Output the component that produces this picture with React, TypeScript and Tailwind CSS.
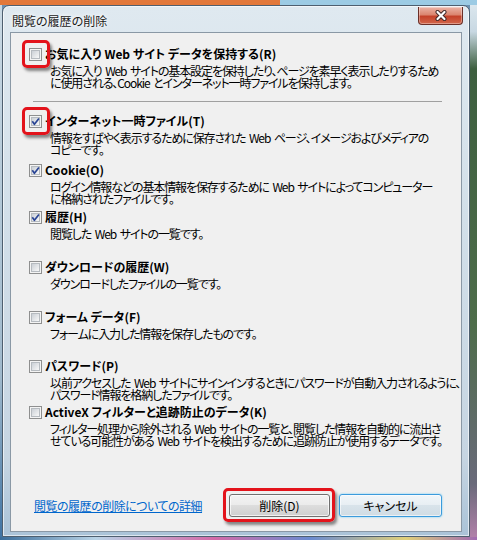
const options = [
  {
    title: "インターネット一時ファイル(T)",
    lines: [
      "情報をすばやく表示するために保存された Web ページ、イメージおよびメディアの",
      "コピーです。",
    ],
    checked: true,
    marked: true,
    h: "h-[49px]",
  },
  {
    title: "Cookie(O)",
    lines: [
      "ログイン情報などの基本情報を保存するために Web サイトによってコンピューター",
      "に格納されたファイルです。",
    ],
    checked: true,
    marked: false,
    h: "h-[47px]",
  },
  {
    title: "履歴(H)",
    lines: ["閲覧した Web サイトの一覧です。"],
    checked: true,
    marked: false,
    h: "h-[50px]",
  },
  {
    title: "ダウンロードの履歴(W)",
    lines: ["ダウンロードしたファイルの一覧です。"],
    checked: false,
    marked: false,
    h: "h-[50px]",
  },
  {
    title: "フォーム データ(F)",
    lines: ["フォームに入力した情報を保存したものです。"],
    checked: false,
    marked: false,
    h: "h-[49px]",
  },
  {
    title: "パスワード(P)",
    lines: [
      "以前アクセスした Web サイトにサインインするときにパスワードが自動入力されるように、",
      "パスワード情報を格納したファイルです。",
    ],
    checked: false,
    marked: false,
    h: "h-[46px]",
  },
  {
    title: "ActiveX フィルターと追跡防止のデータ(K)",
    lines: [
      "フィルター処理から除外される Web サイトの一覧と、閲覧した情報を自動的に流出さ",
      "せている可能性がある Web サイトを検出するために追跡防止が使用するデータです。",
    ],
    checked: false,
    marked: false,
    h: "",
  },
];

function Checkbox({ checked }: { checked: boolean }) {
  return (
    <span className="relative flex h-[13px] w-[13px] shrink-0 border border-[#8e8f8f] bg-[#f4f4f4] p-px">
      <span className="h-full w-full border border-[#b6bbc0] bg-[linear-gradient(135deg,#cbd0d6,#f8f8f8)]" />
      {checked && (
        <svg viewBox="0 0 13 13" className="absolute -inset-px h-[13px] w-[13px]">
          <path
            d="M3.3 6.3 5.4 9.3 9.9 3.4"
            fill="none"
            stroke="#2a4595"
            strokeWidth="1.7"
            strokeLinejoin="round"
          />
        </svg>
      )}
    </span>
  );
}

// red annotation frame drawn over the screenshot
function Mark({ className }: { className: string }) {
  return (
    <span
      className={`pointer-events-none absolute rounded-[5px] border-[3px] border-[#e3131b] shadow-[2px_3px_3px_rgba(0,0,0,0.45)] ${className}`}
    />
  );
}

function Option({
  title,
  lines,
  checked,
  marked,
}: {
  title: string;
  lines: string[];
  checked: boolean;
  marked: boolean;
}) {
  return (
    <div>
      <div className="flex h-[18px] items-center">
        <span className="relative">
          <Checkbox checked={checked} />
          {marked && <Mark className="-left-[7px] -top-[8px] h-[28px] w-[28px]" />}
        </span>
        <span className="ml-[3px] font-bold">{title}</span>
      </div>
      <div className="mt-[2px] whitespace-nowrap pl-[21px] leading-[12px] tracking-[-1.1px] [word-spacing:2px]">
        {lines.map((l) => (
          <div key={l}>{l}</div>
        ))}
      </div>
    </div>
  );
}

export default function App() {
  return (
    <div className="relative flex h-[540px] w-[477px] flex-col overflow-hidden bg-[#6a8fb0] font-['Noto_Sans_CJK_JP',sans-serif] [font-feature-settings:'palt']">
      <div className="flex h-[5px] shrink-0">
        <div className="w-[280px] bg-[#e2783a]" />
        <div className="flex-1 bg-[#9ccbe4]" />
      </div>

      <div className="flex flex-1">
        <div className="w-[2px] bg-[linear-gradient(180deg,#c9d9e4,#9fb9cc_70%,#3f73a3)]" />
        <div className="flex w-[468px] flex-col rounded-t-[7px] border border-[#4e5f6f] bg-[linear-gradient(180deg,#dfe9f0_0%,#d2dfe9_40%,#c6d5e2_85%,#aac3d8_100%)] shadow-[inset_0_0_0_1px_rgba(255,255,255,0.6)]">
          <div className="flex h-[26px] shrink-0 items-start justify-between pl-[9px] pr-[6px]">
            <span className="mt-[9px] text-[12px] leading-[12px] text-[#1a1a1a] [text-shadow:0_0_6px_#fff,0_0_3px_#fff]">
              閲覧の履歴の削除
            </span>
            <button className="mt-px flex h-[18px] w-[45px] items-center justify-center rounded-b-[4px] border border-t-0 border-[#6b2f27] bg-[linear-gradient(180deg,#ebb4a6_0%,#db8670_45%,#c4422a_55%,#d2674b_100%)] shadow-[inset_0_0_0_1px_rgba(255,255,255,0.35)]">
              <svg viewBox="0 0 14 11" className="h-[11px] w-[14px]">
                <path d="M3.5 2 10.5 9M10.5 2 3.5 9" stroke="#3b2525" strokeWidth="4" strokeLinecap="round" />
                <path d="M3.5 2 10.5 9M10.5 2 3.5 9" stroke="#fff" strokeWidth="2.2" strokeLinecap="round" />
              </svg>
            </button>
          </div>

          <div className="mx-[7px] mb-[4px] flex flex-1 flex-col border border-[#8a98a5] bg-[#f0f0f0] text-[12px] text-black">
            <div className="pl-[18px] pt-[12px]">
              <Option
                title="お気に入り Web サイト データを保持する(R)"
                lines={[
                  "お気に入り Web サイトの基本設定を保持したり、ページを素早く表示したりするため",
                  "に使用される、Cookie とインターネット一時ファイルを保持します。",
                ]}
                checked={false}
                marked
              />
            </div>
            <div className="ml-[22px] mr-[19px] mt-[12px] h-px bg-[#a0a0a0]" />
            <div className="mt-[10px] flex flex-col pl-[18px]">
              {options.map((o) => (
                <div key={o.title} className={o.h}>
                  <Option title={o.title} lines={o.lines} checked={o.checked} marked={o.marked} />
                </div>
              ))}
            </div>

            <div className="mt-auto flex items-center pb-[14px] pl-[23px] pr-[19px]">
              <a href="#" className="tracking-[-0.5px] text-[#0066cc] underline">
                閲覧の履歴の削除についての詳細
              </a>
              <div className="ml-auto flex">
                <span className="relative">
                  <button className="h-[23px] w-[101px] rounded-[3px] border border-[#707070] bg-[linear-gradient(180deg,#f2f2f2_0%,#ebebeb_50%,#dddddd_50%,#cfcfcf_100%)] shadow-[inset_0_0_0_1px_rgba(255,255,255,0.7)]">
                    削除(D)
                  </button>
                  <Mark className="-left-[6px] -top-[6px] h-[34px] w-[112px]" />
                </span>
                <button className="ml-[9px] h-[23px] w-[103px] rounded-[3px] border border-[#3c9bdc] bg-[linear-gradient(180deg,#f1f6f9_0%,#e7eef3_50%,#d8e3ea_50%,#d0dce4_100%)] shadow-[0_0_2px_#5ec8f5,inset_0_0_0_1px_rgba(255,255,255,0.6)]">
                  キャンセル
                </button>
              </div>
            </div>
          </div>
        </div>
        <div className="flex-1 bg-[linear-gradient(180deg,#dbe7ee_0%,#c8d8e2_5%,#3d5f3f_12%,#4e6d4a_60%,#6a6a7a_90%,#b080a8_100%)]" />
      </div>

      <div className="h-[3px] shrink-0 bg-[linear-gradient(to_right,#3a6d9a,#b9d3e6_20%,#d36aa8_45%,#6a8bd0_65%,#e0d07a_85%,#a06ab0)]" />
    </div>
  );
}
